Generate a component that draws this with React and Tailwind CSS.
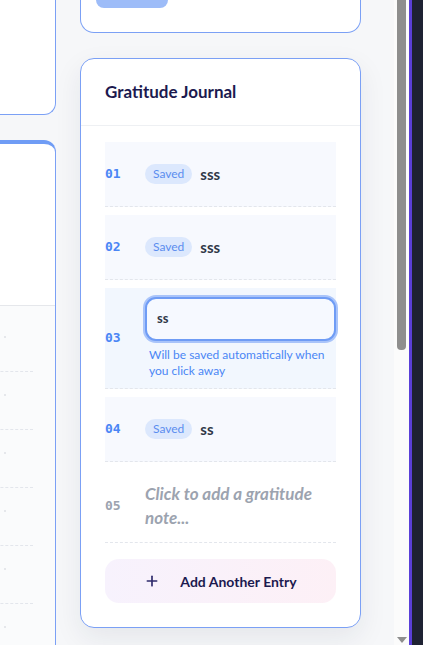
import { Plus } from "lucide-react"

const entries = [
  { n: "01", state: "saved", text: "sss" },
  { n: "02", state: "saved", text: "sss" },
  { n: "03", state: "editing", text: "ss" },
  { n: "04", state: "saved", text: "ss" },
  { n: "05", state: "empty" },
]

function Entry({ entry }) {
  const { n, state, text } = entry
  const bg =
    state === "saved" ? "bg-[#f7f9fe]" : state === "editing" ? "bg-[#f2f7fe]" : ""
  return (
    <div
      className={`flex items-center border-b border-dashed border-[#e3e6ec] ${bg} ${
        state === "empty" ? "py-[12px]" : "min-h-[65px] py-[9px]"
      }`}
    >
      <div
        className={`w-10 shrink-0 text-[13px] font-bold ${
          state === "empty" ? "text-[#9ca3af]" : "text-[#4a86f5]"
        }`}
        style={{ fontFamily: "'DejaVu Sans Mono', monospace" }}
      >
        {n}
      </div>
      {state === "saved" && (
        <div className="flex items-center gap-2">
          <span className="rounded-full bg-[#dce8fd] px-2 h-5 leading-5 text-[12px] text-[#5b8def]">
            Saved
          </span>
          <span className="text-[15px] font-bold text-[#2f3747]">{text}</span>
        </div>
      )}
      {state === "editing" && (
        <div className="flex-1 min-w-0">
          <div className="h-[44px] rounded-[11px] border-2 border-[#6f9cf5] ring-2 ring-[#a9c4fa] bg-[#f6f9ff] px-[10px] flex items-center">
            <span className="text-[13px] font-bold text-[#2f3747]">{text}</span>
          </div>
          <p className="mt-[6px] pl-1 text-[12px] leading-[16px] text-[#4a86f5]">
            Will be saved automatically when you click away
          </p>
        </div>
      )}
      {state === "empty" && (
        <p className="text-[17px] leading-[24px] font-bold italic text-[#9ca3af]">
          Click to add a gratitude note...
        </p>
      )}
    </div>
  )
}

export default function App() {
  return (
    <div
      className="flex h-[645px] w-[423px] overflow-hidden bg-[#f6f7f9]"
      style={{ fontFamily: "Lato, 'Noto Sans', sans-serif" }}
    >
      {/* page */}
      <div className="flex w-[394px] shrink-0 gap-[24px]">
        {/* left column (mostly off-screen) */}
        <div className="w-[56px] shrink-0 overflow-hidden">
          <div className="ml-[-300px] w-[356px] flex flex-col gap-[25px]">
            <div className="h-[115px] rounded-b-[12px] border border-t-0 border-[#7ba0f5] bg-white" />
            <div className="h-[520px] rounded-t-[12px] border border-[#7ba0f5] border-t-4 border-t-[#6f9cf5] bg-white">
              <div className="h-[162px] border-b border-[#e5e7eb]" />
              <div className="bg-[#fafbfc] pt-[8px]">
                {[0, 1, 2, 3, 4, 5].map((i) => (
                  <div key={i} className="relative h-[58px]">
                    <span className="absolute left-[303px] top-[22px] h-[2px] w-[2px] bg-[#e5e7eb]" />
                    <div className="absolute bottom-0 left-[260px] w-[72px] border-b border-dashed border-[#e3e6ec]" />
                  </div>
                ))}
              </div>
            </div>
          </div>
        </div>

        {/* right column */}
        <div className="w-[281px] shrink-0 flex flex-col gap-[25px]">
          <div className="h-[33px] rounded-b-[14px] border border-t-0 border-[#7ba0f5] bg-white px-[15px]">
            <div className="h-[8px] w-[72px] rounded-b-full bg-[#9dbcf8]" />
          </div>

          <div className="rounded-[14px] border border-[#7ba0f5] bg-white shadow-[0_10px_28px_rgba(30,40,70,0.08)]">
            <div className="h-[67px] flex items-center px-6 border-b border-[#eef0f3]">
              <h2 className="text-[17px] font-bold text-[#1c1a4f]">Gratitude Journal</h2>
            </div>
            <div className="px-6 pt-4 pb-6">
              <div className="flex flex-col gap-2">
                {entries.map((e) => (
                  <Entry key={e.n} entry={e} />
                ))}
              </div>
              <button className="mt-4 h-[44px] w-full rounded-[14px] bg-gradient-to-r from-[#f7f2fd] to-[#fdf0f6] flex items-center justify-center gap-5 text-[14px] font-bold text-[#1c1a4f]">
                <Plus size={16} strokeWidth={2.5} className="text-[#2e2a6b]" />
                Add Another Entry
              </button>
            </div>
          </div>
        </div>
      </div>

      {/* scrollbar */}
      <div className="w-[15px] shrink-0 bg-[#fbfbfb] flex flex-col items-center justify-between">
        <div className="h-[350px] w-[9px] rounded-b-[4px] bg-[#8e8e8e]" />
        <div className="mb-[2px] h-0 w-0 border-x-[5px] border-t-[6px] border-x-transparent border-t-[#8e8e8e]" />
      </div>
      <div className="w-[3px] shrink-0 bg-[#5a3fd8]" />
      <div className="flex-1 bg-[#1e2233]" />
    </div>
  )
}
